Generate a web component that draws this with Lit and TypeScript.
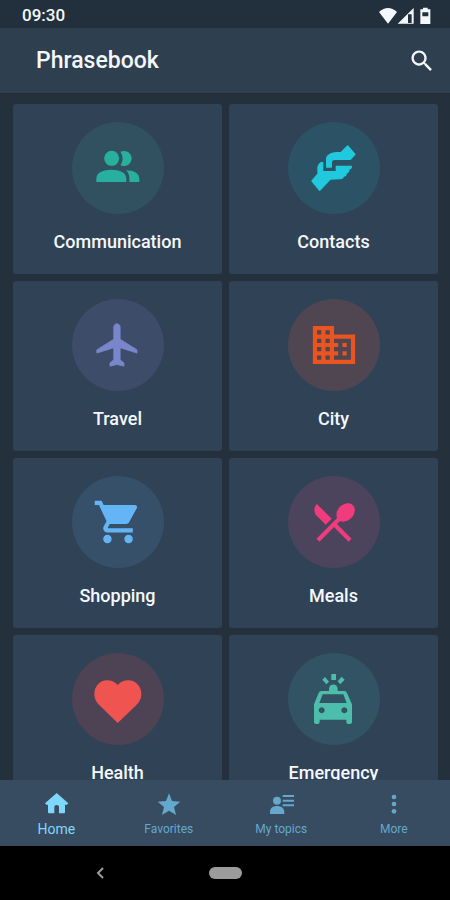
import { LitElement, html, css, svg, type SVGTemplateResult } from "lit";
import { customElement } from "lit/decorators.js";
import { classMap } from "lit/directives/class-map.js";

interface Topic {
  label: string;
  tone: string;
  viewBox: string;
  art: SVGTemplateResult;
}

interface Tab {
  label: string;
  id: string;
  viewBox: string;
  art: SVGTemplateResult;
}

// Places a 24-unit glyph in the middle of the round badge.
const GLYPH_BOX = "-9.75 -9.75 43.5 43.5";

const topics: Topic[] = [
  {
    label: "Communication",
    tone: "teal",
    viewBox: "36 39 276 276",
    art: svg`<circle cx="155" cy="148" r="22.500"/>
      <path d="M181 128c22-8 34 8 34 20s-12 30-34 21c9-14 9-27 0-41z"/>
      <path d="M109 219v-10c0-19 20-27 45-27s45 8 45 27v10z"/>
      <path d="M198 184c24 0 40 9 40 26v9h-30v-10c0-11-3-18-10-25z"/>`,
  },
  {
    label: "Contacts",
    tone: "cyan",
    viewBox: "24 38 276 276",
    art: svg`<g stroke="currentColor" stroke-width="4" stroke-linejoin="round"><path d="M203 110l22 25-14 15h-47q-10 1-10 10v13h-14v-25q0-6 4-9 8-7 18-8l22-2z"/>
      <path d="M124 160h4v27h41v-16h45q0 8-8 9 2 9-7 11 0 9-9 10-1 6-9 7l-30 1-32 34-23-28 18-21v-17q0-11 10-17z"/></g>`,
  },
  {
    label: "Travel",
    tone: "indigo",
    viewBox: GLYPH_BOX,
    art: svg`<path stroke="currentColor" stroke-width=".4" stroke-linejoin="round" d="M21 15.800v-1.500l-8-5V3.500c0-.83-.67-1.500-1.500-1.500S10 2.670 10 3.500V9.300l-8 5v1.500l8-2.500V19l-1.800 1.500V22l3.300-.8 3.300.8v-1.500L13 19v-5.700l8 2.500z"/>`,
  },
  {
    label: "City",
    tone: "orange",
    viewBox: GLYPH_BOX,
    art: svg`<path d="M12 7V3H2v18h20V7H12zM6 19H4v-2h2v2zm0-4H4v-2h2v2zm0-4H4V9h2v2zm0-4H4V5h2v2zm4 12H8v-2h2v2zm0-4H8v-2h2v2zm0-4H8V9h2v2zm0-4H8V5h2v2zm10 12h-8v-2h2v-2h-2v-2h2v-2h-2V9h8v10zm-2-8h-2v2h2v-2zm0 4h-2v2h2v-2z"/>`,
  },
  {
    label: "Shopping",
    tone: "blue",
    viewBox: GLYPH_BOX,
    art: svg`<path d="M7 18c-1.100 0-1.990.9-1.990 2S5.900 22 7 22s2-.9 2-2-.9-2-2-2zM1 2v2h2l3.600 7.590-1.350 2.450c-.16.28-.25.61-.25.96 0 1.100.9 2 2 2h12v-2H7.420c-.14 0-.25-.11-.25-.25l.03-.12.9-1.630h7.450c.75 0 1.410-.41 1.750-1.030l3.580-6.490c.08-.14.12-.31.12-.48 0-.55-.45-1-1-1H5.210l-.94-2H1zm16 16c-1.100 0-1.990.9-1.990 2s.89 2 1.990 2 2-.9 2-2-.9-2-2-2z"/>`,
  },
  {
    label: "Meals",
    tone: "pink",
    viewBox: GLYPH_BOX,
    art: svg`<path d="M8.100 13.340l2.830-2.830L3.910 3.500c-1.560 1.560-1.560 4.090 0 5.660l4.190 4.180zm6.780-1.810c1.530.71 3.680.21 5.270-1.380 1.910-1.910 2.280-4.650.81-6.120-1.460-1.460-4.200-1.100-6.120.81-1.590 1.590-2.090 3.740-1.380 5.270L3.700 19.870l1.410 1.410L12 14.410l6.880 6.880 1.410-1.410L13.410 13l1.470-1.470z"/>`,
  },
  {
    label: "Health",
    tone: "red",
    viewBox: "36 39 276 276",
    art: svg`<path d="M173 249l-53-52c-10-10-17-20-17-36 0-22 17-40 38-40 13 0 25 5 32 14 7-9 19-14 32-14 22 0 39 18 39 40 0 16-7 26-17 36z"/>`,
  },
  {
    label: "Emergency",
    tone: "mint",
    viewBox: "24 38 276 276",
    art: svg`<path fill-rule="evenodd" d="M124 152h23v-7c0-17 26-17 26 0v7h20q6 0 8 6l15 34v53q0 6-6 6h-5q-6 0-6-6v-7h-80v7q0 6-6 6h-5q-6 0-6-6v-53l14-34q2-6 8-6zM128 162l-10 26h82l-10-26zM125 201a9 9 0 1 0 .1 0zM193 201a9 9 0 1 0 .1 0z"/>
      <path d="M154 101h14v18h-14zM135 110l12 14-8 8-12-14zM185 109l9 9-13 14-8-9z"/>`,
  },
];

const tabs: Tab[] = [
  {
    label: "Home",
    id: "home",
    viewBox: "129 60 81 81",
    art: svg`<path d="M170 69l35 31-4 4h-6v23q0 3-3 3h-15v-20q0-5-7-5t-7 5v20h-16q-3 0-3-3v-23h-5l-4-4z"/>`,
  },
  {
    label: "Favorites",
    id: "favorites",
    viewBox: "466 60 81 81",
    art: svg`<path d="M508 70l9 23 25 2-19 16 6 24-21-13-21 13 6-24-19-16 25-2z"/>`,
  },
  {
    label: "My topics",
    id: "my-topics",
    viewBox: "129 60 81 81",
    art: svg`<circle cx="156" cy="92" r="12"/>
      <path d="M135 132v-6c0-12 9-18 21-18s22 6 22 18v6zM173 75h34v6h-34zM173 89h34v6h-34zM173 103h34v6h-34z"/>`,
  },
  {
    label: "More",
    id: "more",
    viewBox: "466 60 81 81",
    art: svg`<circle cx="508" cy="81" r="7"/><circle cx="508" cy="102" r="7"/><circle cx="508" cy="124" r="7"/>`,
  },
];

@customElement("app-root")
export class AppRoot extends LitElement {
  static styles = css`
    :host {
      display: flex;
      flex-direction: column;
      height: 100vh;
      background: #24313d;
      color: #f4f8fc;
      font-family: Roboto, "Liberation Sans", sans-serif;
    }
    * {
      box-sizing: border-box;
    }
    button {
      border: 0;
      padding: 0;
      background: none;
      color: inherit;
      font: inherit;
      cursor: pointer;
    }
    svg {
      display: block;
      fill: currentColor;
    }
    .status {
      display: flex;
      flex: none;
      align-items: center;
      justify-content: space-between;
      height: 28px;
      padding: 2px 18px 0 22px;
      background: #22303d;
      font-size: 17px;
      font-weight: 500;
    }
    .indicators {
      width: 54px;
      height: 19px;
    }
    .bar {
      display: flex;
      flex: none;
      align-items: center;
      justify-content: space-between;
      height: 66px;
      padding: 0 14px 0 36px;
      background: #2e3f4f;
      border-bottom: 1px solid #222c36;
    }
    .title {
      margin: 0;
      font-size: 23px;
      font-weight: 500;
      line-height: 28px;
    }
    .search svg {
      width: 28px;
      height: 28px;
    }
    .topics {
      display: grid;
      flex: 1;
      grid-template-columns: 1fr 1fr;
      grid-auto-rows: 170px;
      gap: 7px;
      min-height: 0;
      padding: 10px 12px 10px 13px;
      overflow-y: auto;
      scrollbar-width: none;
    }
    .card {
      display: flex;
      flex-direction: column;
      align-items: center;
      gap: 16px;
      padding-top: 18px;
      border-radius: 3px;
      background: #304256;
      font-size: 18px;
      font-weight: 500;
      line-height: 24px;
    }
    .badge {
      width: 92px;
      height: 92px;
      border-radius: 50%;
    }
    .teal { color: #26b09d; background: #315161; }
    .cyan { color: #20c9de; background: #2c5266; }
    .indigo { color: #7986cb; background: #3d4c68; }
    .orange { color: #ea5420; background: #4f4652; }
    .blue { color: #64b5f6; background: #375069; }
    .pink { color: #f03c7c; background: #4c435d; }
    .red { color: #f05451; background: #4d4354; }
    .mint { color: #4dbdac; background: #315363; }
    .tabs {
      display: grid;
      flex: none;
      grid-template-columns: repeat(4, 1fr);
      height: 66px;
      background: #374c60;
    }
    .tab {
      display: flex;
      flex-direction: column;
      align-items: center;
      gap: 4px;
      padding-top: 10px;
      color: #64a8cd;
      font-size: 12px;
      line-height: 16px;
      text-decoration: none;
    }
    .tab svg {
      width: 27px;
      height: 27px;
    }
    .current {
      color: #7fd7fc;
      font-size: 14px;
    }
    .system {
      display: grid;
      flex: none;
      grid-template-columns: 4fr 1fr 4fr;
      align-items: center;
      justify-items: center;
      height: 54px;
      background: #000;
      color: #9c9c9c;
    }
    .back svg {
      width: 8px;
      height: 14px;
    }
    .pill {
      width: 33px;
      height: 12px;
      border-radius: 6px;
      background: currentColor;
    }
  `;

  render() {
    return html`
      <div class="status">
        <time>09:30</time>
        <svg class="indicators" viewBox="459 12 162 57" aria-hidden="true">
          <path d="M489 65l-27-35q27-24 54 0z" />
          <path fill-rule="evenodd" d="M566 18v47h-48zM549 37v26h11V37z" />
          <path
            fill-rule="evenodd"
            d="M594 17h14v5h8v44h-30V22h8zM592 31v12h18V31z"
          />
        </svg>
      </div>
      <header class="bar">
        <h1 class="title">Phrasebook</h1>
        <button class="search" aria-label="Search">
          <svg viewBox="0 0 24 24">
            <path
              d="M15.500 14h-.79l-.28-.27C15.410 12.590 16 11.110 16 9.500 16 5.910 13.090 3 9.500 3S3 5.910 3 9.500 5.910 16 9.500 16c1.610 0 3.090-.59 4.230-1.570l.27.28v.79l5 4.990L20.490 19l-4.990-5zm-6 0C7.010 14 5 11.990 5 9.500S7.010 5 9.500 5 14 7.010 14 9.500 11.990 14 9.500 14z"
            />
          </svg>
        </button>
      </header>
      <main class="topics">
        ${topics.map(
          (t) => html`
            <button class="card">
              <svg class="badge ${t.tone}" viewBox=${t.viewBox} aria-hidden="true">${t.art}</svg>
              <span>${t.label}</span>
            </button>
          `
        )}
      </main>
      <nav class="tabs">
        ${tabs.map(
          (t, i) => html`
            <a class=${classMap({ tab: true, current: i === 0 })} href="#${t.id}">
              <svg viewBox=${t.viewBox} aria-hidden="true">${t.art}</svg>
              <span>${t.label}</span>
            </a>
          `
        )}
      </nav>
      <footer class="system">
        <button class="back" aria-label="Back">
          <svg viewBox="0 0 8 14">
            <path d="M7 2L2 7l5 5" fill="none" stroke="currentColor" stroke-width="2" />
          </svg>
        </button>
        <button class="pill" aria-label="Home screen"></button>
      </footer>
    `;
  }
}
